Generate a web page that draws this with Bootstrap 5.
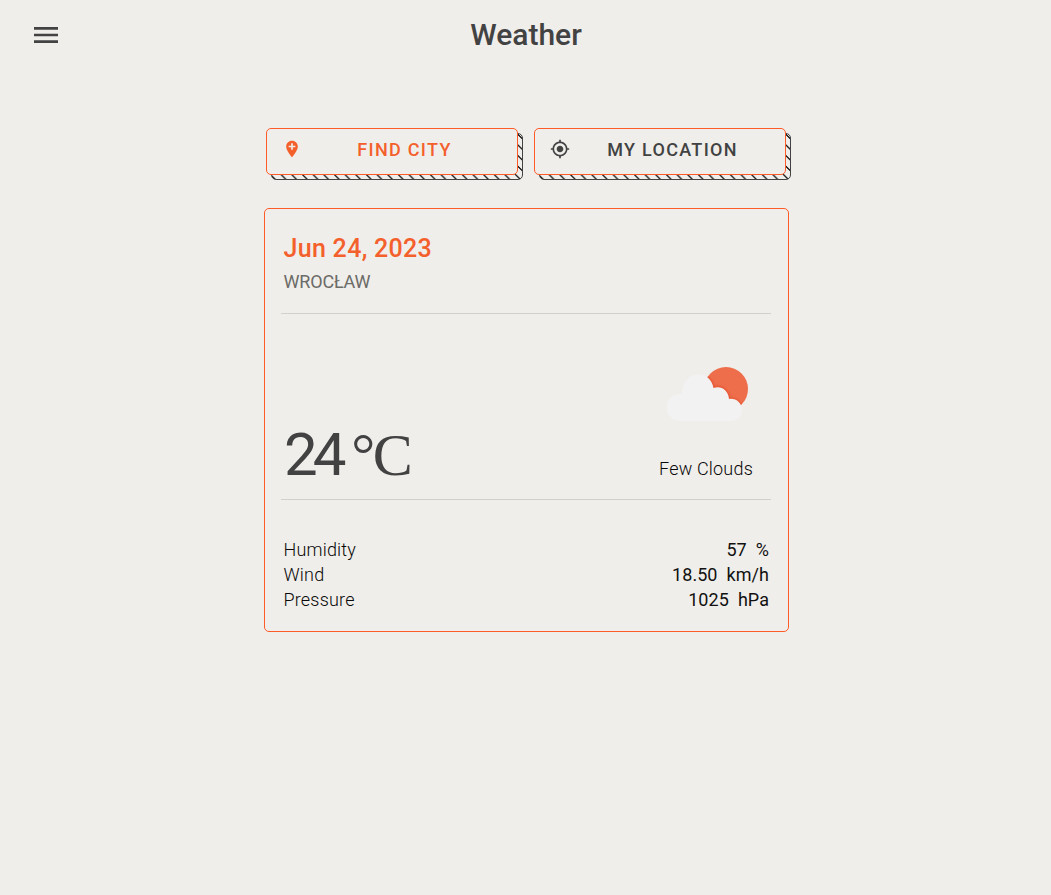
<!DOCTYPE html>
<html lang="en">
<head>
<meta charset="utf-8">
<meta name="viewport" content="width=device-width, initial-scale=1">
<title>Weather</title>
<link href="https://cdn.jsdelivr.net/npm/bootstrap@5.3.0/dist/css/bootstrap.min.css" rel="stylesheet">
<style>
body{background:#f0eeea;color:#212121;font-family:Roboto,sans-serif;font-size:18px;line-height:25px;letter-spacing:.3px;min-height:100vh}
.topbar{height:70px}
.menu-btn{left:30px;top:19px;color:#424243;line-height:0}
.page-title{font-size:30px;font-weight:500;line-height:36px;color:#424243;letter-spacing:0;padding-left:1px}
.panel{width:525px;margin-left:264px}
.actions{padding-left:2px;margin-top:58px;gap:16px}
.hatch-btn{width:252px;height:47px;border:1px solid #ff5b29;border-radius:5px;background:#f0eeea;color:#424243;font-size:18px;font-weight:500;letter-spacing:1.3px;padding:0 10px 4px 15px}
.hatch-btn svg{position:relative;top:-1px}
.hatch-wrap{isolation:isolate}
.hatch-wrap::before{content:"";position:absolute;z-index:-1;left:5px;top:5px;width:252px;height:47px;border:1px solid #424243;border-radius:5px;background:repeating-linear-gradient(45deg,#212121 0,#212121 1px,#f0eeea 0,#f0eeea 50%) 0 0/10.67px 10.67px}
.accent{color:#f4602c}
.weather{height:424px;margin-top:33px;border:1px solid #ff5b29;border-radius:5px;padding:0 17px 0 16px}
.head{height:105px;padding:24px 3px 0 2.5px;border-bottom:1px solid #d2d0cd}
.date{font-size:25px;font-weight:500;line-height:31px;letter-spacing:.3px}
.town{color:#6b6b67;margin-top:5px;letter-spacing:-.15px}
.now{height:186px;padding:0 18px 18px 3px;border-bottom:1px solid #d2d0cd}
.temp{font-size:60px;line-height:58px;color:#424243;letter-spacing:-5px;margin-bottom:-3px}
.unit{font-family:"Liberation Serif",serif;font-size:60px;letter-spacing:-2.5px}
.stats{padding:37px 2px 0 2.5px}
.label-text,.sky{font-weight:300;letter-spacing:.19px;color:#080808}
.sky{margin-top:28px}
.val{font-weight:400;letter-spacing:.05px;white-space:pre;color:#111}
</style>
</head>
<body>
<header class="topbar position-relative d-flex justify-content-center align-items-center">
  <button class="menu-btn btn p-0 border-0 position-absolute" aria-label="Menu"><svg width="32" height="32" viewBox="0 0 24 24" fill="currentColor"><path d="M3 18h18v-2H3v2zm0-5h18v-2H3v2zm0-7v2h18V6H3z"/></svg></button>
  <h1 class="page-title mb-0">Weather</h1>
</header>
<main class="panel">
  <div class="actions d-flex">
    <div class="hatch-wrap position-relative"><button class="hatch-btn accent d-flex align-items-center"><svg width="20" height="20" viewBox="0 0 24 24" fill="currentColor"><path d="M12 2C8.14 2 5 5.14 5 9c0 5.25 7 13 7 13s7-7.75 7-13c0-3.86-3.14-7-7-7zm4 8h-3v3h-2v-3H8V8h3V5h2v3h3v2z"/></svg><span class="flex-fill text-center">FIND CITY</span></button></div>
    <div class="hatch-wrap position-relative"><button class="hatch-btn d-flex align-items-center"><svg width="20" height="20" viewBox="0 0 24 24" fill="currentColor"><path d="M12 8c-2.21 0-4 1.79-4 4s1.79 4 4 4 4-1.79 4-4-1.79-4-4-4zm8.94 3c-.46-4.17-3.77-7.48-7.94-7.94V1h-2v2.060C6.830 3.520 3.520 6.830 3.060 11H1v2h2.060c.46 4.170 3.770 7.480 7.940 7.940V23h2v-2.060c4.170-.46 7.480-3.770 7.940-7.940H23v-2h-2.060zM12 19c-3.870 0-7-3.130-7-7s3.130-7 7-7 7 3.130 7 7-3.130 7-7 7z"/></svg><span class="flex-fill text-center">MY LOCATION</span></button></div>
  </div>
  <section class="weather">
    <div class="head">
      <div class="date accent">Jun 24, 2023</div>
      <div class="town">WROCŁAW</div>
    </div>
    <div class="now d-flex justify-content-between align-items-end">
      <div class="temp">24 <span class="unit">°C</span></div>
      <div>
        <svg class="d-block" width="94" height="64" viewBox="659 364 94 64"><defs><filter id="soft"><feGaussianBlur stdDeviation=".8"/></filter><clipPath id="sun"><circle cx="726" cy="389" r="22"/></clipPath></defs><circle cx="726" cy="389" r="22" fill="#ee6e4c"/><path clip-path="url(#sun)" d="M680 421a13.500 13.500 0 0 1 0-27h2C682 383 688 374.500 698 374.500c8 0 14 5 15.500 13.500 7-3 15 2 15.500 11 7-1 13 4 13 11s-5 11-11 11z" fill="none" stroke="#e4502c" stroke-width="2" filter="url(#soft)"/><path d="M680 421a13.500 13.500 0 0 1 0-27h2C682 383 688 374.500 698 374.500c8 0 14 5 15.500 13.500 7-3 15 2 15.500 11 7-1 13 4 13 11s-5 11-11 11z" fill="#f2f2f2"/></svg>
        <div class="sky">Few Clouds</div>
      </div>
    </div>
    <div class="stats">
      <div class="d-flex justify-content-between"><span class="label-text">Humidity</span><span class="val">57  %</span></div>
      <div class="d-flex justify-content-between"><span class="label-text">Wind</span><span class="val">18.50  km/h</span></div>
      <div class="d-flex justify-content-between"><span class="label-text">Pressure</span><span class="val">1025  hPa</span></div>
    </div>
  </section>
</main>
<script src="https://cdn.jsdelivr.net/npm/bootstrap@5.3.0/dist/js/bootstrap.bundle.min.js"></script>
</body>
</html>
